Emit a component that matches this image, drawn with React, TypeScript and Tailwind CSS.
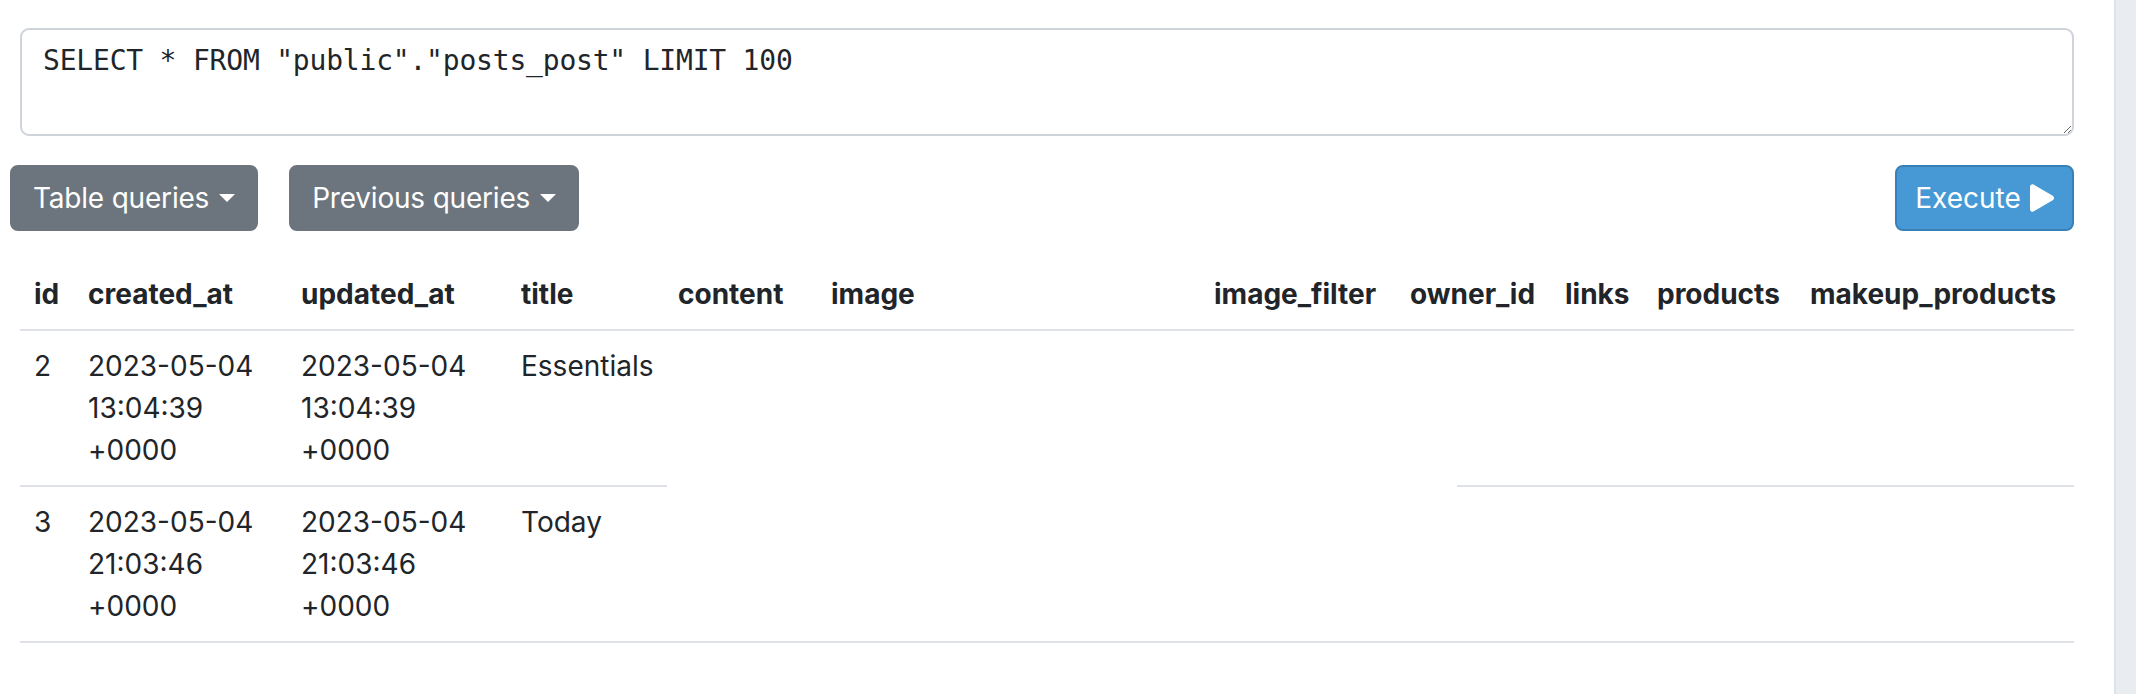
import React from 'react'

const COLS: { name: string; w: string }[] = [
  { name: 'id', w: 'w-[54px]' },
  { name: 'created_at', w: 'w-[213px]' },
  { name: 'updated_at', w: 'w-[220px]' },
  { name: 'title', w: 'w-[157px]' },
  { name: 'content', w: 'w-[153px]' },
  { name: 'image', w: 'w-[383px]' },
  { name: 'image_filter', w: 'w-[196px]' },
  { name: 'owner_id', w: 'w-[155px]' },
  { name: 'links', w: 'w-[92px]' },
  { name: 'products', w: 'w-[153px]' },
  { name: 'makeup_products', w: 'w-[278px]' },
]

const ROWS = [
  { id: '2', created: '2023-05-04 13:04:39 +0000', updated: '2023-05-04 13:04:39 +0000', title: 'Essentials' },
  { id: '3', created: '2023-05-04 21:03:46 +0000', updated: '2023-05-04 21:03:46 +0000', title: 'Today' },
]

function Caret() {
  return <span className="ml-[10px] inline-block h-0 w-0 border-x-[8px] border-t-[8px] border-x-transparent border-t-white align-[5px]" />
}

function PlayIcon() {
  return (
    <svg viewBox="0 0 448 512" className="ml-[9px] h-[28px] w-[24px] fill-white">
      <path d="M424.4 214.7L72.4 6.6C43.8-10.3 0 6.1 0 47.9V464c0 37.5 40.7 60.1 72.4 41.3l352-208c31.4-18.5 31.5-64.1 0-82.6z" />
    </svg>
  )
}

export default function App() {
  return (
    <div className="flex h-[694px] w-full overflow-hidden bg-white font-['Inter','Noto_Sans',sans-serif] text-[28px] leading-[42px] text-[#212529]">
      <main className="flex-1 pl-[20px] pr-[40px] pt-[28px]">
        {/* Query editor */}
        <textarea
          readOnly
          rows={2}
          defaultValue={'SELECT * FROM "public"."posts_post" LIMIT 100'}
          className="block h-[108px] w-full rounded-[9px] border-2 border-[#ced4da] px-[21px] py-[10px] font-['DejaVu_Sans_Mono','Liberation_Mono',monospace] text-[28px] leading-[42px] tracking-[-0.2px] text-[#212529] outline-none"
        />

        {/* Actions */}
        <div className="-ml-[10px] mt-[29px] flex items-center">
          <button className="flex h-[66px] items-center rounded-[8px] border-2 border-[#6c757d] bg-[#6c757d] px-[21px] tracking-[-0.2px] text-white">
            Table queries
            <Caret />
          </button>
          <button className="ml-[31px] flex h-[66px] items-center rounded-[8px] border-2 border-[#6c757d] bg-[#6c757d] px-[21px] tracking-[-0.2px] text-white">
            Previous queries
            <Caret />
          </button>
          <button className="ml-auto flex h-[66px] w-[179px] items-center justify-center rounded-[8px] border-2 border-[#3a80b8] bg-[#4699d4] text-white">
            Execute
            <PlayIcon />
          </button>
        </div>

        {/* Results */}
        <table className="mt-[28px] w-full table-fixed border-separate border-spacing-0">
          <colgroup>
            {COLS.map((c) => (
              <col key={c.name} className={c.w} />
            ))}
          </colgroup>
          <thead>
            <tr>
              {COLS.map((c) => (
                <th key={c.name} className="whitespace-nowrap border-b-2 border-[#dee2e6] p-[14px] text-left align-bottom font-bold">
                  {c.name}
                </th>
              ))}
            </tr>
          </thead>
          <tbody>
            {ROWS.map((r, i) => {
              const full = 'border-b-2 border-[#dee2e6]'
              const gap = i === 0
              return (
                <tr key={r.id}>
                  <td className={`p-[14px] align-top ${full}`}>{r.id}</td>
                  <td className={`p-[14px] align-top ${full}`}>{r.created}</td>
                  <td className={`p-[14px] align-top ${full}`}>{r.updated}</td>
                  <td className={`p-[14px] align-top ${full}`}>{r.title}</td>
                  <td className={gap ? 'bg-[linear-gradient(#dee2e6,#dee2e6)] bg-[length:3px_2px] bg-left-bottom bg-no-repeat p-[14px]' : `p-[14px] ${full}`} />
                  <td className={gap ? 'p-[14px]' : `p-[14px] ${full}`} />
                  <td className={gap ? 'p-[14px]' : `p-[14px] ${full}`} />
                  <td className={gap ? 'bg-[linear-gradient(#dee2e6,#dee2e6)] bg-[length:94px_2px] bg-right-bottom bg-no-repeat p-[14px]' : `p-[14px] ${full}`} />
                  <td className={`p-[14px] ${full}`} />
                  <td className={`p-[14px] ${full}`} />
                  <td className={`p-[14px] ${full}`} />
                </tr>
              )
            })}
          </tbody>
        </table>
      </main>

      {/* Scrollbar track */}
      <div className="w-[22px] shrink-0 border-l-2 border-[#dde3ea] bg-[#e9edf2]" />
    </div>
  )
}
